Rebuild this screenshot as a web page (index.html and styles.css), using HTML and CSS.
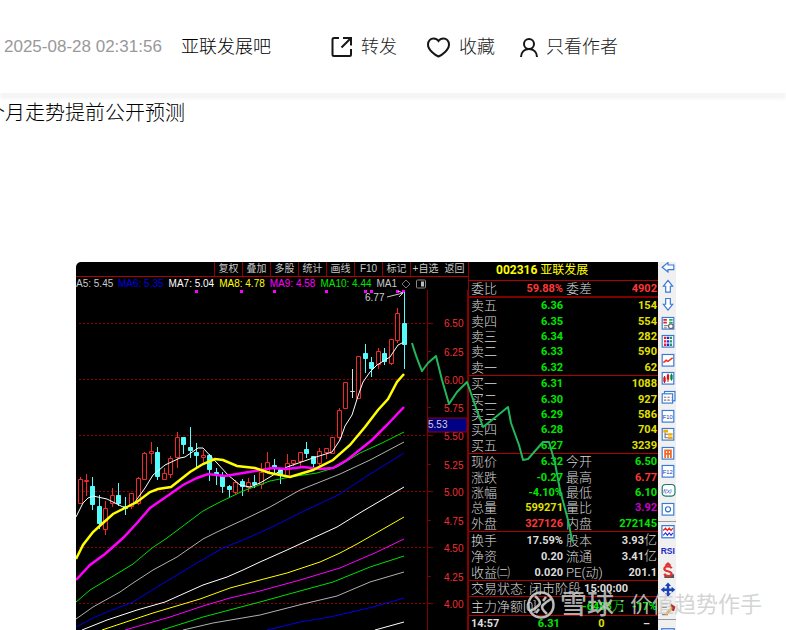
FILE: index.html
```html
<!DOCTYPE html>
<html lang="zh-CN">
<head>
<meta charset="utf-8">
<title>亚联发展吧</title>
<link rel="stylesheet" href="styles.css">
</head>
<body>
<header class="bar">
  <time class="date">2025-08-28 02:31:56</time>
  <a class="forum" href="#">亚联发展吧</a>
  <nav class="actions">
    <button class="action" type="button">
      <svg width="22" height="24" viewBox="0 0 22 24"><path d="M8 3H3Q1.500 3 1.500 4.500V19.500Q1.500 21 3 21H18.500Q20 21 20 19.500V14M12 3H20V10.500M20 3L10.500 12.500"/></svg>
      转发
    </button>
    <button class="action" type="button">
      <svg width="29" height="24" viewBox="0 0 29 24"><path d="M16.500 21.500C13 20 6 15 6 9.500C6 6 8.500 3.500 11.500 3.500C14 3.500 15.500 4.500 16.500 6C17.500 4.500 19 3.500 21.500 3.500C24.500 3.500 27 6 27 9.500C27 15 20 20 16.500 21.500Z"/></svg>
      收藏
    </button>
    <button class="action" type="button">
      <svg width="18" height="24" viewBox="0 0 18 24"><circle cx="9" cy="9" r="5"/><path d="M1 22C1 17 4.500 14 9 14S17 17 17 22"/></svg>
      只看作者
    </button>
  </nav>
</header>
<main>
  <h1 class="title">个月走势提前公开预测</h1>
  <figure class="shot">
    <section class="chart">
      <nav class="menu">
        <a href="#">复权</a><a href="#">叠加</a><a href="#">多股</a><a href="#">统计</a><a href="#">画线</a><a href="#">F10</a><a href="#">标记</a><a class="wide" href="#">+自选</a><a class="plain" href="#">返回</a>
      </nav>
      <div class="legend">
        <span class="silver first">A5: 5.45</span><span class="blue">MA6: 5.35</span><span class="white">MA7: 5.04</span><span class="yellow">MA8: 4.78</span><span class="magenta">MA9: 4.58</span><span class="lime">MA10: 4.44</span><span class="silver">MA1</span>
        <svg width="26" height="10" viewBox="0 0 26 10"><path d="M4 1L8 5L4 9L0 5Z" fill="none" stroke="#777"/><rect x="14.500" y="1" width="9" height="8" rx="1" fill="none" stroke="#888"/><rect x="19" y="2.500" width="3" height="5" fill="#bbb"/></svg>
      </div>
      <svg class="plot" viewBox="76 290 392 340">
        <path class="dots" d="M79 323.500H433M79 379.500H433M79 435.500H433M79 491.500H433M79 547.500H433M79 603.500H433"/>
        <path class="axis" d="M427.500 276V630M467.500 276V630M428 323.500H433M428 351.500H431M428 379.500H433M428 407.500H431M428 435.500H433M428 464.500H431M428 491.500H433M428 520.500H431M428 547.500H433M428 576.500H431M428 603.500H433"/>
        <g id="marks"></g>
        <g id="candles"></g>
        <g class="line">
          <polyline class="s-lime" points="76,602 90,590 110,578 133,564 152,548 167,538 187,523 203,511 220,502 243,491 270,481 290,477 317,473 337,467 360,453 382,443 404,432"/>
          <polyline class="s-silver" points="76,619 93,607 120,592 133,583 153,570 177,557 203,539 217,532 243,520 270,507 300,490 340,474 370,460 404,442"/>
          <polyline class="s-blue" points="76,627 93,618 107,612 133,602 157,587 197,563 223,548 243,540 270,528 300,513 340,494 370,474 404,453"/>
          <polyline class="s-white" points="82,630 107,620 137,610 165,602 203,585 227,577 243,570 260,562 287,550 313,538 337,527 363,511 404,487"/>
          <polyline class="s-yellow" points="102,630 153,613 200,599 230,588 260,580 287,573 320,562 340,553 357,544 404,517"/>
          <polyline class="s-magenta" points="125,630 170,617 203,606 230,598 260,591 300,580 340,568 377,552 404,539"/>
          <polyline class="s-lime" points="162,630 203,617 237,608 260,602 300,591 333,582 370,567 404,556"/>
          <polyline class="s-silver" points="183,630 213,623 260,615 303,604 337,596 370,582 404,572"/>
          <polyline class="s-blue" points="267,630 300,622 330,617 373,607 404,598"/>
          <polyline class="s-white" points="375,630 404,622"/>
          <polyline class="s-white" points="76,517 83,503 88,498 93,496 107,499 115,503 125,508 135,502 145,488 153,475 165,465 180,458 185,457 198,448 203,448 217,463 228,475 240,485 250,487 260,483 270,477 287,467 313,458 332,452 340,440 345,426 352,415 358,396 363,382 370,372 377,365 390,357 398,345 404,342"/>
          <polyline class="thick s-magenta" points="76,580 90,565 105,554 123,538 137,523 150,508 163,499 183,485 197,478 208,474 225,476 237,474 255,471 273,468 287,469 303,467 320,469 333,468 347,460 372,440 387,425 404,407"/>
          <polyline class="thick s-yellow" points="76,559 83,545 93,532 103,523 113,514 125,508 137,502 150,492 158,489 171,487 190,472 203,464 215,459 223,460 237,466 255,468 270,473 290,477 313,470 333,460 350,445 365,427 378,410 388,399 397,382 404,374"/>
        </g>
        <text class="peak" x="365" y="301">6.77</text>
        <path class="arrow" d="M387 297L403 293M398 291L403 293L399 297"/>
        <g id="scale" class="scale"></g>
        <rect x="428" y="418" width="39" height="14" fill="#000084" stroke="#900"/>
        <text class="peak" x="428" y="428">5.53</text>
      </svg>
    </section>
    <section class="quote">
      <h2 class="stock">002316 <span>亚联发展</span></h2>
      <table class="g1"><tr><th>委比</th><td class="red">59.88%</td><th>委差</th><td class="red">4902</td></tr></table>
      <table class="g5 dark">
        <tr><th>卖五</th><td class="lime">6.36</td><th></th><td class="yel">154</td></tr>
        <tr><th>卖四</th><td class="lime">6.35</td><th></th><td class="yel">554</td></tr>
        <tr><th>卖三</th><td class="lime">6.34</td><th></th><td class="yel">282</td></tr>
        <tr><th>卖二</th><td class="lime">6.33</td><th></th><td class="yel">590</td></tr>
        <tr><th>卖一</th><td class="lime">6.32</td><th></th><td class="yel">62</td></tr>
      </table>
      <table class="g5">
        <tr><th>买一</th><td class="lime">6.31</td><th></th><td class="yel">1088</td></tr>
        <tr><th>买二</th><td class="lime">6.30</td><th></th><td class="yel">927</td></tr>
        <tr><th>买三</th><td class="lime">6.29</td><th></th><td class="yel">586</td></tr>
        <tr><th>买四</th><td class="lime">6.28</td><th></th><td class="yel">704</td></tr>
        <tr><th>买五</th><td class="lime">6.27</td><th></th><td class="yel">3239</td></tr>
      </table>
      <table class="g5">
        <tr><th>现价</th><td class="lime">6.32</td><th>今开</th><td class="lime">6.50</td></tr>
        <tr><th>涨跌</th><td class="lime">-0.27</td><th>最高</th><td class="red">6.77</td></tr>
        <tr><th>涨幅</th><td class="lime">-4.10%</td><th>最低</th><td class="lime">6.10</td></tr>
        <tr><th>总量</th><td class="yel">599271</td><th>量比</th><td class="purple">3.92</td></tr>
        <tr><th>外盘</th><td class="red">327126</td><th>内盘</th><td class="lime">272145</td></tr>
      </table>
      <table class="g3">
        <tr><th>换手</th><td>17.59%</td><th>股本</th><td>3.93<i>亿</i></td></tr>
        <tr><th>净资</th><td>0.20</td><th>流通</th><td>3.41<i>亿</i></td></tr>
        <tr><th>收益㈡</th><td>0.020</td><th>PE(动)</th><td>201.1</td></tr>
      </table>
      <p class="row state">交易状态: 闭市阶段 <b>15:00:00</b></p>
      <p class="row flow"><span>主力净额[0]</span><b class="lime">-6483<i>万</i></b><b class="lime">-17%</b></p>
      <p class="row tick"><b>14:57</b><b class="lime">6.31</b><b class="yel">0</b><b>–</b></p>
    </section>
    <aside class="tools">
      <div class="set long">
        <svg viewBox="0 0 16 16"><path class="arr" d="M3 8L8 4V6H13V10H8V12Z"/></svg>
        <svg viewBox="0 0 16 16"><path class="arr" d="M8 3L12 8H10V13H6V8H4Z"/></svg>
        <svg viewBox="0 0 16 16"><path class="arr" d="M8 13L12 8H10V3H6V8H4Z"/></svg>
        <svg viewBox="0 0 16 16"><rect class="box" x="3" y="3" width="10" height="10"/><path d="M4 5H7M4 7.500H7" stroke="#d22" stroke-width="1.500"/><path d="M9 5H12M9 7.500H12" stroke="#2a5" stroke-width="1.500"/><path d="M4.500 10H8M4.500 12H7" stroke="#888"/><circle cx="10.500" cy="10.500" r="2" fill="#fff" stroke="#666"/></svg>
        <svg viewBox="0 0 16 16"><rect class="box" x="3" y="3" width="10" height="10"/><g stroke-width="2" stroke-dasharray="2 1"><path d="M5.500 4V12" stroke="#e22"/><path d="M8 4V12" stroke="#22e"/><path d="M10.500 4V12" stroke="#295"/></g></svg>
        <svg viewBox="0 0 16 16"><rect class="box" x="3" y="3" width="10" height="10"/><path d="M4 10L6.500 8L8 9L12 6" fill="none" stroke="#e32" stroke-width="1.300"/></svg>
        <svg viewBox="0 0 16 16"><rect class="box" x="3" y="3" width="10" height="10"/><path d="M5 6V12M8 4V11" stroke="#d11"/><path d="M4 7H6V11H4ZM7 5H9V9H7Z" fill="#d11"/><path d="M11 4V10" stroke="#084"/><path d="M10 5H12V9H10Z" fill="#084"/></svg>
        <svg viewBox="0 0 16 16"><rect class="box" x="5" y="3" width="9" height="8"/><rect class="box" x="3" y="5" width="9" height="8"/><path d="M4.500 8H11M4.500 10.500H11" stroke="#777" stroke-dasharray="2 1"/></svg>
        <svg viewBox="0 0 16 16"><rect class="box" x="3" y="3" width="10" height="10"/><text x="3.500" y="10.500">F10</text></svg>
        <svg viewBox="0 0 16 16"><rect class="box" x="3" y="3" width="10" height="10"/><path d="M4 4H8V6.500H4ZM8 7H12V9H8ZM8 10H12V12H8Z" fill="#f5a800"/><path d="M5.500 6.500V11H8M5.500 8H8" fill="none" stroke="#777"/></svg>
        <svg viewBox="0 0 16 16"><rect class="box" x="3" y="3" width="10" height="10"/><path d="M5.500 12V5.500H10.500V12M8 5.500V12M5.500 8.500H10.500" fill="none" stroke="#f16a20" stroke-width="1.500"/></svg>
        <svg viewBox="0 0 16 16"><rect class="box" x="3" y="3" width="10" height="10"/><text x="3.500" y="10.500">F12</text></svg>
        <svg viewBox="0 0 16 16"><rect x="3" y="3" width="11" height="10" rx="3" fill="#fff" stroke="#197b6c"/><text x="4" y="10.500" font-style="italic">f(x)</text></svg>
        <svg viewBox="0 0 16 16"><rect class="box" x="3" y="3" width="10" height="10"/><circle cx="8" cy="8" r="2.200" fill="none" stroke="#2c73c8"/></svg>
      </div>
      <div class="set short">
        <svg viewBox="0 0 16 16"><rect class="box" x="3" y="3" width="10" height="10"/><path d="M4 7L6 5L7.500 7L9 5L10.500 7L12 5" fill="none" stroke="#e22"/><path d="M4 11L6 9L7.500 11L9 9L10.500 11L12 9" fill="none" stroke="#33d"/></svg>
        <svg viewBox="0 0 16 16"><text class="rsi" x="2" y="11">RSI</text></svg>
        <svg viewBox="0 0 16 16"><path d="M5 13H12V11" fill="none" stroke="#555" stroke-width="2"/><path d="M11 6C10 4 5 4 5 6.500S11 8 11 10.500S6 13 5 10.500M6 4L8 2L10 4" fill="none" stroke="#d33" stroke-width="1.800"/></svg>
        <svg viewBox="0 0 16 16"><path d="M8 2L10.500 5H9V7H11V5.500L14 8L11 10.500V9H9V11H10.500L8 14L5.500 11H7V9H5V10.500L2 8L5 5.500V7H7V5H5.500Z" fill="#1742b8"/></svg>
        <svg viewBox="0 0 16 16"><path d="M3 3H8M3 6H7M3 12H8" stroke="#888"/><path d="M6 12L12 6" stroke="#eba22b" stroke-width="2"/><path d="M10 4L13 6L12 9" fill="none" stroke="#a33" stroke-width="2"/></svg>
      </div>
      <svg viewBox="0 0 16 16"><rect class="box" x="3" y="7" width="10" height="9"/></svg>
    </aside>
    <svg class="trend" viewBox="76 262 600 368"><path d="M412 343C414 350 417 359 422 371L428 363L436 356L442 380L449 404L457 392L467 382L475 405L483 427L492 420L508 407L511 423L519 445L523 460L528 459L543 442L549 442L555 463L560 490L564 505L568 520L572 540L574 541"/></svg>
    <figcaption class="mark">
      <svg width="28" height="28" viewBox="0 0 28 28"><circle cx="14" cy="14" r="12.500"/><path d="M8 5Q15 11 12 14Q9 17 4 20M20 23Q13 17 16 14Q19 11 24 8M9 22L12 18M19 6L16 10"/></svg>
      <span class="brand">雪球</span><span class="colon">:</span><span>价值趋势作手</span>
    </figcaption>
  </figure>
</main>
<script src="chart.js"></script>
</body>
</html>
```
FILE: styles.css
```css
* { box-sizing: border-box; }
body {
  margin: 0;
  background: #fff;
  color: #111;
  font-family: "Liberation Sans", "Noto Sans CJK SC", sans-serif;
  height: 100vh;
  overflow: hidden;
}
.bar {
  display: flex;
  align-items: center;
  height: 93px;
  padding-left: 4px;
  font-size: 18px;
  line-height: 18px;
  font-weight: 300;
  white-space: nowrap;
  box-shadow: 0 6px 3px #f5f5f5;
}
.date { font-size: 17px; color: #999; width: 177px; }
.forum { color: #000; text-decoration: none; width: 150px; }
.actions { display: flex; gap: 25px; }
.action {
  display: flex;
  align-items: center;
  gap: 8px;
  padding: 0;
  border: 0;
  background: none;
  font: inherit;
  line-height: 18px;
  color: #222;
}
.action svg { fill: none; stroke: #161616; stroke-width: 2; }
.title {
  margin: 8px 0 0 -15px;
  color: #000;
  font-size: 20px;
  line-height: 24px;
  font-weight: 300;
  white-space: nowrap;
}
.shot {
  position: relative;
  display: grid;
  grid-template-columns: 392px 190px 18px;
  height: 368px;
  margin: 137px 0 0 76px;
}
.chart {
  background: #000;
  border-top-left-radius: 5px;
  overflow: hidden;
}
.menu {
  display: flex;
  justify-content: flex-end;
  height: 15px;
  border-bottom: 1px solid #b00000;
  font-size: 10px;
  line-height: 13px;
}
.menu a {
  width: 28px;
  border-left: 1px solid #900000;
  color: #c8c8c8;
  text-align: center;
  text-decoration: none;
  white-space: nowrap;
}
.menu .wide { width: 30px; }
.menu .plain { border-color: transparent; }
.legend {
  display: flex;
  align-items: center;
  gap: 5px;
  height: 13px;
  font-size: 10px;
  white-space: nowrap;
}
.first { width: 37px; }
.silver { color: #c8c8c8; }
.blue { color: #0000e0; }
.white { color: #fff; }
.yellow { color: #ff0; }
.magenta { color: #f0f; }
.lime { color: #00e600; }
.plot { display: block; width: 100%; }
.dots { stroke: #900000; stroke-dasharray: 2 2; }
.axis { stroke: #800000; }
.line polyline { fill: none; stroke-width: 1; }
.line .thick { stroke-width: 2.5; }
.line .s-lime { stroke: #00e000; }
.line .s-silver { stroke: #b0b0b0; }
.line .s-blue { stroke: #0000e8; }
.line .s-white { stroke: #fff; }
.line .s-yellow { stroke: #ff0; }
.line .s-magenta { stroke: #f0f; }
.up { fill: #000; stroke: #f02828; }
.down { fill: #54fcfc; stroke: #54fcfc; }
.flat { stroke: #ddd; fill: none; }
.mark-dot { fill: #f0f; }
.peak { fill: #d0d0d0; font-size: 10px; }
.arrow { fill: none; stroke: #ccc; }
.scale { fill: #f03030; font-size: 10px; }
.quote {
  background: #000;
  border-left: 1px solid #900000;
  color: #ddd;
  font-family: Roboto, "Noto Sans CJK SC", sans-serif;
  font-size: 11px;
  overflow: hidden;
}
.stock {
  margin: 0;
  height: 18px;
  padding-left: 27px;
  color: #ff0;
  font-size: 12px;
  line-height: 17px;
}
.stock span { font-weight: 400; }
.quote table {
  width: 100%;
  table-layout: fixed;
  border-spacing: 0;
  border-top: 1px solid #b00000;
  line-height: 13px;
}
.quote th, .quote td { padding: 0; white-space: nowrap; }
.quote th {
  padding-left: 2px;
  font-size: 13px;
  font-weight: 300;
  text-align: left;
  color: #d8d8d8;
}
.quote td { padding-right: 1px; font-weight: 700; text-align: right; }
.quote i { font-style: normal; font-weight: 300; font-size: 13px; line-height: 11px; }
.quote th:nth-child(1) { width: 32px; }
.quote td:nth-child(2) { width: 63px; }
.quote th:nth-child(3) { width: 32px; }
.g1 { height: 16px; }
.g5 { height: 78px; }
.g3 { height: 49px; }
.quote .dark { height: 79px; border-top: 2px solid #800000; }
.quote .red { color: #ff3838; }
.quote .yel { color: #e0e000; }
.quote .purple { color: #c800c8; }
.row {
  display: flex;
  align-items: center;
  height: 16px;
  margin: 0;
  padding: 0 1px 0 2px;
  border-top: 1px solid #b00000;
  font-size: 13px;
  font-weight: 300;
  line-height: 13px;
  white-space: pre;
}
.row b { font-size: 11px; font-weight: 700; }
.flow { height: 19px; gap: 7px; }
.flow span { flex: 1; }
.tick { justify-content: space-between; padding-right: 8px; }
.tools {
  background: #f0f0f0;
  overflow: hidden;
}
.tools svg { display: block; width: 20px; height: 20px; }
.set {
  display: flex;
  flex-direction: column;
  justify-content: space-between;
  border-bottom: 1px solid #999;
}
.long { height: 264px; padding: 0 0 3px; margin-top: -4px; }
.short { height: 98px; }
.arr { fill: #fff; stroke: #3878d8; }
.box { fill: #fff; stroke: #3878d8; }
.tools text { font-size: 5px; fill: #1638b0; }
.tools .rsi { font-size: 7px; font-weight: 700; fill: #2028c8; }
.trend {
  position: absolute;
  inset: 0 auto auto 0;
  width: 600px;
  fill: none;
  stroke: #22b85a;
  stroke-width: 2;
  stroke-linejoin: round;
}
.mark {
  position: absolute;
  left: 451px;
  top: 327px;
  display: flex;
  align-items: center;
  height: 32px;
  color: rgba(205, 205, 205, 0.85);
  font-size: 22px;
  line-height: 32px;
  white-space: nowrap;
}
.mark svg { fill: none; stroke: rgba(220, 220, 220, 0.85); stroke-width: 2.5; }
.brand { margin-left: 5px; font-size: 27px; font-weight: 500; }
.colon { width: 16px; text-align: center; }
```
FILE: chart.js
```js
// Each candle: direction, high, body top, body bottom, low
const candles = [
  ["up",477,479,503,503],["up",474,480,481,495],["down",477,486,504,509],["down",495,506,523,528],
  ["up",501,508,529,534],["up",488,495,503,506],["down",483,495,503,505],["down",497,506,508,514],
  ["up",493,493,506,508],["up",477,478,503,504],["up",452,453,479,479],["up",442,451,453,463],
  ["down",447,452,476,479],["up",468,473,479,479],["up",456,458,474,477],["up",432,437,457,467],
  ["down",437,437,444,453],["down",427,447,450,457],["down",443,452,455,467],["up",450,455,457,463],
  ["down",454,455,469,480],["down",468,472,475,484],["down",472,475,486,492],["down",485,486,489,497],
  ["up",480,482,492,493],["down",479,481,486,495],["up",478,482,487,491],["down",475,482,484,487],
  ["up",463,472,484,488],["up",452,462,472,473],["down",459,465,467,473],["down",468,469,474,483],
  ["up",454,463,475,476],["up",460,460,463,465],["up",452,452,461,465],["down",442,449,453,457],
  ["down",456,456,463,466],["up",448,451,463,465],["up",448,448,452,458],["up",437,437,453,453],
  ["up",408,410,437,440],["up",382,382,408,408],["flat",369,391,391,397],["up",356,356,398,398],
  ["down",344,353,358,372],["down",357,362,368,376],["up",348,351,364,368],["down",348,353,361,364],
  ["up",339,339,363,364],["up",308,313,340,342],["down",292,323,344,368]
];
const put = (id, markup) => { document.getElementById(id).innerHTML = markup; };
put("candles", candles.map(([kind, high, top, bottom, low], i) => {
  const x = Math.floor(80 + i * 6.48) + 0.5;
  const y1 = top + 0.5, y2 = bottom + 0.5;
  return `<path class="${kind}" d="M${x} ${high}V${y1}M${x} ${y2}V${low + 1}M${x - 2} ${y1}H${x + 2}V${y2}H${x - 2}Z"/>` +
    (kind === "flat" ? `<path class="flat" d="M${x} ${high}V${low}"/>` : "");
}).join(""));
put("marks", [196, 241, 274, 326, 365, 371, 397, 403]
  .map(x => `<rect class="mark-dot" x="${x - 1}" y="290" width="3" height="3"/>`).join(""));
put("scale", [["6.50",323],["6.25",352],["6.00",380],["5.75",408],["5.50",436],["5.25",465],["5.00",492],["4.75",521],["4.50",548],["4.25",577],["4.00",604]]
  .map(([label, y]) => `<text x="444" y="${y + 4}">${label}</text>`).join(""));
```
